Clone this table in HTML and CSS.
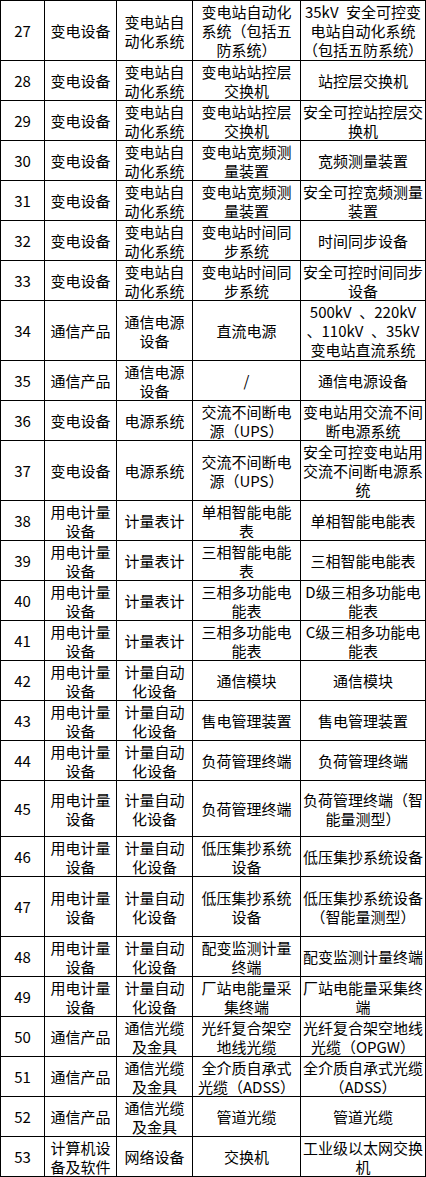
FILE: index.html
```html
<!DOCTYPE html>
<html lang="zh-CN">
<head>
<meta charset="utf-8">
<title>产品目录</title>
<link rel="stylesheet" href="styles.css">
</head>
<body>
<table class="catalog">
  <colgroup>
    <col class="c-no">
    <col class="c-cat">
    <col class="c-sub">
    <col class="c-item">
    <col class="c-desc">
  </colgroup>
  <tbody>
    <tr class="h60"><td>27</td><td>变电设备</td><td>变电站自<br>动化系统</td><td>变电站自动化<br>系统（包括五<br>防系统）</td><td>35kV&ensp;安全可控变<br>电站自动化系统<br>（包括五防系统）</td></tr>
    <tr class="h40"><td>28</td><td>变电设备</td><td>变电站自<br>动化系统</td><td>变电站站控层<br>交换机</td><td>站控层交换机</td></tr>
    <tr class="h40"><td>29</td><td>变电设备</td><td>变电站自<br>动化系统</td><td>变电站站控层<br>交换机</td><td>安全可控站控层交<br>换机</td></tr>
    <tr class="h40"><td>30</td><td>变电设备</td><td>变电站自<br>动化系统</td><td>变电站宽频测<br>量装置</td><td>宽频测量装置</td></tr>
    <tr class="h40"><td>31</td><td>变电设备</td><td>变电站自<br>动化系统</td><td>变电站宽频测<br>量装置</td><td>安全可控宽频测量<br>装置</td></tr>
    <tr class="h40"><td>32</td><td>变电设备</td><td>变电站自<br>动化系统</td><td>变电站时间同<br>步系统</td><td>时间同步设备</td></tr>
    <tr class="h40"><td>33</td><td>变电设备</td><td>变电站自<br>动化系统</td><td>变电站时间同<br>步系统</td><td>安全可控时间同步<br>设备</td></tr>
    <tr class="h60"><td>34</td><td>通信产品</td><td>通信电源<br>设备</td><td>直流电源</td><td>500kV&ensp;、220kV<br>、110kV&ensp;、35kV<br>变电站直流系统</td></tr>
    <tr class="h40"><td>35</td><td>通信产品</td><td>通信电源<br>设备</td><td>/</td><td>通信电源设备</td></tr>
    <tr class="h40"><td>36</td><td>变电设备</td><td>电源系统</td><td>交流不间断电<br>源（UPS）</td><td>变电站用交流不间<br>断电源系统</td></tr>
    <tr class="h60"><td>37</td><td>变电设备</td><td>电源系统</td><td>交流不间断电<br>源（UPS）</td><td>安全可控变电站用<br>交流不间断电源系<br>统</td></tr>
    <tr class="h40"><td>38</td><td>用电计量<br>设备</td><td>计量表计</td><td>单相智能电能<br>表</td><td>单相智能电能表</td></tr>
    <tr class="h40"><td>39</td><td>用电计量<br>设备</td><td>计量表计</td><td>三相智能电能<br>表</td><td>三相智能电能表</td></tr>
    <tr class="h40"><td>40</td><td>用电计量<br>设备</td><td>计量表计</td><td>三相多功能电<br>能表</td><td>D级三相多功能电<br>能表</td></tr>
    <tr class="h40"><td>41</td><td>用电计量<br>设备</td><td>计量表计</td><td>三相多功能电<br>能表</td><td>C级三相多功能电<br>能表</td></tr>
    <tr class="h40"><td>42</td><td>用电计量<br>设备</td><td>计量自动<br>化设备</td><td>通信模块</td><td>通信模块</td></tr>
    <tr class="h40"><td>43</td><td>用电计量<br>设备</td><td>计量自动<br>化设备</td><td>售电管理装置</td><td>售电管理装置</td></tr>
    <tr class="h40"><td>44</td><td>用电计量<br>设备</td><td>计量自动<br>化设备</td><td>负荷管理终端</td><td>负荷管理终端</td></tr>
    <tr class="h56"><td>45</td><td>用电计量<br>设备</td><td>计量自动<br>化设备</td><td>负荷管理终端</td><td>负荷管理终端（智<br>能量测型）</td></tr>
    <tr class="h40"><td>46</td><td>用电计量<br>设备</td><td>计量自动<br>化设备</td><td>低压集抄系统<br>设备</td><td>低压集抄系统设备</td></tr>
    <tr class="h60"><td>47</td><td>用电计量<br>设备</td><td>计量自动<br>化设备</td><td>低压集抄系统<br>设备</td><td>低压集抄系统设备<br>（智能量测型）</td></tr>
    <tr class="h40"><td>48</td><td>用电计量<br>设备</td><td>计量自动<br>化设备</td><td>配变监测计量<br>终端</td><td>配变监测计量终端</td></tr>
    <tr class="h40"><td>49</td><td>用电计量<br>设备</td><td>计量自动<br>化设备</td><td>厂站电能量采<br>集终端</td><td>厂站电能量采集终<br>端</td></tr>
    <tr class="h40"><td>50</td><td>通信产品</td><td>通信光缆<br>及金具</td><td>光纤复合架空<br>地线光缆</td><td>光纤复合架空地线<br>光缆（OPGW）</td></tr>
    <tr class="h40"><td>51</td><td>通信产品</td><td>通信光缆<br>及金具</td><td>全介质自承式<br>光缆（ADSS）</td><td>全介质自承式光缆<br>（ADSS）</td></tr>
    <tr class="h40"><td>52</td><td>通信产品</td><td>通信光缆<br>及金具</td><td>管道光缆</td><td>管道光缆</td></tr>
    <tr class="h40"><td>53</td><td>计算机设<br>备及软件</td><td>网络设备</td><td>交换机</td><td>工业级以太网交换<br>机</td></tr>
  </tbody>
</table>
</body>
</html>
```

FILE: styles.css
```css
html, body {
  margin: 0;
  padding: 0;
  background: #ffffff;
}

.catalog {
  table-layout: fixed;
  width: 426px;
  border-collapse: separate;
  border-spacing: 0;
  border-top: 1px solid #000;
  border-left: 1px solid #000;
  font-family: "Noto Sans CJK SC", "Noto Sans", sans-serif;
  font-size: 15px;
  color: #000;
}

.c-no { width: 44px; }
.c-cat { width: 72px; }
.c-sub { width: 76px; }
.c-item { width: 108px; }
.c-desc { width: 125px; }

.catalog td {
  box-sizing: border-box;
  padding: 0;
  border-right: 1px solid #000;
  border-bottom: 1px solid #000;
  text-align: center;
  vertical-align: middle;
  line-height: 19px;
  white-space: nowrap;
  overflow: hidden;
}

.h40 { height: 40px; }
.h56 { height: 56px; }
.h60 { height: 60px; }
```
